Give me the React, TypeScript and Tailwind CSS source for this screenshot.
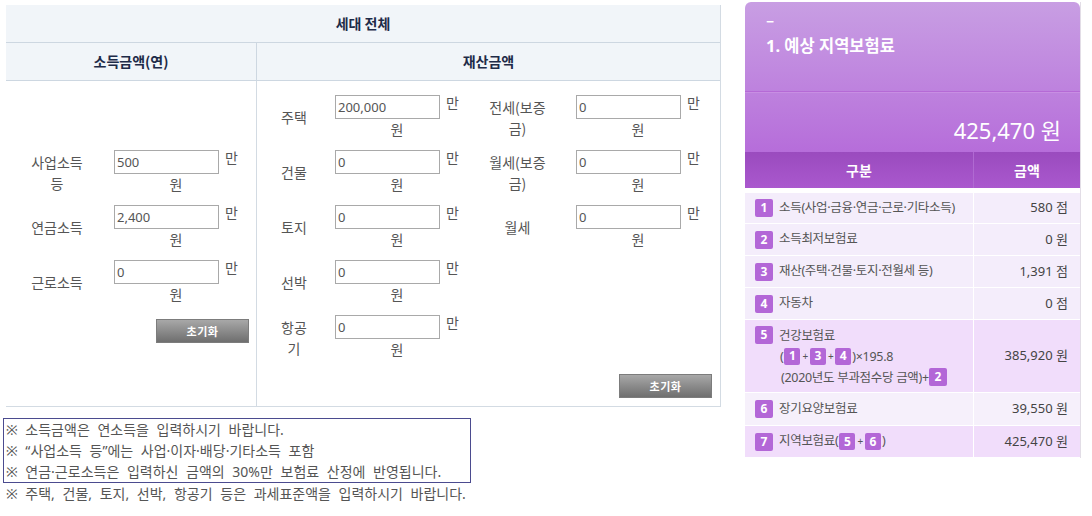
import React from "react";

const F = "font-['Noto_Sans_CJK_KR','Noto_Sans',sans-serif]";
const FL = "font-['Noto_Sans','Noto_Sans_CJK_KR',sans-serif]";

function Field({ value }: { value: string }) {
  return (
    <div className="flex flex-col w-[124px]">
      <div className="flex items-start">
        <input
          readOnly
          value={value}
          className={"w-[105px] h-[24px] border border-[#a9a9a9] px-[2px] text-[13px] text-[#555] bg-white outline-none " + FL}
        />
        <span className="ml-[6px] text-[14px] leading-[16px] text-[#555] -mt-[1px]">만</span>
      </div>
      <div className="text-center text-[14px] leading-[21px] text-[#555]">원</div>
    </div>
  );
}

function ResetBtn({ className }: { className: string }) {
  return (
    <button
      className={
        "w-[93px] h-[24px] border border-[#7c7c7c] bg-gradient-to-b from-[#a8a8a8] to-[#6f6f6f] text-white text-[11px] font-bold tracking-[0.5px] " +
        className
      }
    >
      초기화
    </button>
  );
}

function Badge({ n, small }: { n: string; small?: boolean }) {
  return (
    <span
      className={
        (small ? "w-[16px] h-[17px] mx-[1px]" : "w-[18px] h-[18px]") +
        " inline-flex items-center justify-center rounded-[2px] bg-[#b367d7] text-white text-[12px] font-bold leading-none shrink-0 tracking-normal font-['Noto_Sans',sans-serif]"
      }
    >
      {n}
    </span>
  );
}

function Row({
  bg,
  h,
  children,
  value,
}: {
  bg: string;
  h: string;
  children: React.ReactNode;
  value: string;
}) {
  return (
    <div className={"flex border-b border-white " + bg + " " + h}>
      <div className="w-[229px] border-r border-white pl-[10px] flex items-center text-[12.5px] tracking-[-0.3px] text-[#555] whitespace-nowrap">
        {children}
      </div>
      <div className="flex-1 flex items-center justify-end pr-[12px] text-[13px] text-[#444]">{value}</div>
    </div>
  );
}

export default function App() {
  const labelCls = "text-center text-[14px] leading-[21px] text-[#555]";
  const noteCls =
    "text-[14px] [word-spacing:4px] leading-[21px] text-[#555] whitespace-nowrap " + FL;
  return (
    <div className={"w-[1092px] h-[516px] bg-white flex " + F}>
      <div className="ml-[3px] w-[718px]">
        <div className="ml-[3px] mt-[5px] w-[715px] border-r border-b border-[#d3dbe3]">
          <div className="h-[38px] bg-[#f1f5f9] border-b border-[#cdd7e1] flex items-center justify-center font-bold text-[14px] text-[#1e2b48]">
            세대 전체
          </div>
          <div className="h-[38px] bg-[#f1f5f9] border-b border-[#cdd7e1] flex font-bold text-[14px] text-[#1e2b48]">
            <div className="w-[251px] border-r border-[#cdd7e1] flex items-center justify-center">소득금액(연)</div>
            <div className="flex-1 flex items-center justify-center">재산금액</div>
          </div>
          <div className="flex h-[325px]">
            <div className="w-[251px] border-r border-[#d3dbe3] pt-[69px] flex flex-col">
              <div className="flex flex-col gap-[10px]">
                {[
                  [["사업소득", "등"], "500"],
                  [["연금소득"], "2,400"],
                  [["근로소득"], "0"],
                ].map(([lbl, v], i) => (
                  <div key={i} className="flex items-center">
                    <div className={"w-[102px] " + labelCls}>
                      {(lbl as string[]).map((l, j) => (
                        <div key={j}>{l}</div>
                      ))}
                    </div>
                    <div className="ml-[6px]">
                      <Field value={v as string} />
                    </div>
                  </div>
                ))}
              </div>
              <ResetBtn className="self-end mr-[7px] mt-[14px]" />
            </div>
            <div className="flex-1 pt-[14px] flex flex-col">
              <div className="flex flex-col gap-[10px]">
                {[
                  [["주택"], "200,000", ["전세(보증", "금)"], "0"],
                  [["건물"], "0", ["월세(보증", "금)"], "0"],
                  [["토지"], "0", ["월세"], "0"],
                  [["선박"], "0", null, null],
                  [["항공", "기"], "0", null, null],
                ].map(([l1, v1, l2, v2], i) => (
                  <div key={i} className="flex items-center">
                    <div className={"w-[74px] " + labelCls}>
                      {(l1 as string[]).map((l, j) => (
                        <div key={j}>{l}</div>
                      ))}
                    </div>
                    <div className="ml-[4px]">
                      <Field value={v1 as string} />
                    </div>
                    {l2 && (
                      <>
                        <div className={"w-[117px] " + labelCls}>
                          {(l2 as string[]).map((l, j) => (
                            <div key={j}>{l}</div>
                          ))}
                        </div>
                        <Field value={v2 as string} />
                      </>
                    )}
                  </div>
                ))}
              </div>
              <ResetBtn className="self-end mr-[8px] mt-[14px]" />
            </div>
          </div>
        </div>
        <div className={"mt-[11px] w-[468px] border border-[#4b4b8f] pl-[2px] " + noteCls}>
          <div>※ 소득금액은 연소득을 입력하시기 바랍니다.</div>
          <div>※ “사업소득 등”에는 사업·이자·배당·기타소득 포함</div>
          <div>※ 연금·근로소득은 입력하신 금액의 30%만 보험료 산정에 반영됩니다.</div>
        </div>
        <div className={"pl-[3px] " + noteCls}>
          ※ 주택, 건물, 토지, 선박, 항공기 등은 과세표준액을 입력하시기 바랍니다.
        </div>
      </div>

      <div className="ml-[24px] mt-[2px] w-[336px] border-r border-[#e2dde6] h-[456px]">
        <div className="rounded-t-[6px] bg-gradient-to-b from-[#c89ee3] to-[#b66dda] h-[150px] flex flex-col text-white">
          <div className="h-[90px] border-b border-[#b56ad6] px-[21px] pt-[8px]">
            <div className="text-[15px] font-bold leading-[20px]">–</div>
            <div className={"text-[16.5px] font-bold leading-[22px] mt-[5px] " + FL}>1. 예상 지역보험료</div>
          </div>
          <div className="flex-1 border-t border-[#c88ee3] flex items-end justify-end pr-[19px] pb-[7px]">
            <span className={"text-[22px] leading-[30px] " + FL}>425,470 원</span>
          </div>
        </div>
        <div className={"w-[335px] " + FL}>
          <div className="h-[36px] bg-gradient-to-b from-[#9a4bbe] to-[#aa58ce] flex text-white font-bold text-[14px]">
            <div className="w-[229px] border-r border-[#b06ad2] flex items-center justify-center">구분</div>
            <div className="flex-1 flex items-center justify-center">금액</div>
          </div>
          <div className="h-[5px]" />
          <Row bg="bg-[#f4edfb]" h="h-[31px]" value="580 점">
            <Badge n="1" />
            <span className="ml-[6px]">소득(사업·금융·연금·근로·기타소득)</span>
          </Row>
          <Row bg="bg-[#f4edfb]" h="h-[32px]" value="0 원">
            <Badge n="2" />
            <span className="ml-[6px]">소득최저보험료</span>
          </Row>
          <Row bg="bg-[#f4edfb]" h="h-[32px]" value="1,391 점">
            <Badge n="3" />
            <span className="ml-[6px]">재산(주택·건물·토지·전월세 등)</span>
          </Row>
          <Row bg="bg-[#f4edfb]" h="h-[32px]" value="0 점">
            <Badge n="4" />
            <span className="ml-[6px]">자동차</span>
          </Row>
          <Row bg="bg-[#f1ddfb]" h="h-[73px]" value="385,920 원">
            <div className="flex flex-col leading-[21px]">
              <div className="flex items-center">
                <Badge n="5" />
                <span className="ml-[6px]">건강보험료</span>
              </div>
              <div className="flex items-center pl-[25px]">
                (<Badge n="1" small />
                <span className="text-[10px] px-[1px]">+</span>
                <Badge n="3" small />
                <span className="text-[10px] px-[1px]">+</span>
                <Badge n="4" small />
                )×195.8
              </div>
              <div className="flex items-center pl-[26px]">
                (2020년도 부과점수당 금액)+
                <Badge n="2" />
              </div>
            </div>
          </Row>
          <Row bg="bg-[#f6f0fb]" h="h-[33px]" value="39,550 원">
            <Badge n="6" />
            <span className="ml-[6px]">장기요양보험료</span>
          </Row>
          <Row bg="bg-[#f1ddfb]" h="h-[32px]" value="425,470 원">
            <Badge n="7" />
            <span className="ml-[6px] flex items-center">
              지역보험료(
              <Badge n="5" small />
              <span className="text-[10px] px-[1px]">+</span>
              <Badge n="6" small />)
            </span>
          </Row>
        </div>
      </div>
    </div>
  );
}
